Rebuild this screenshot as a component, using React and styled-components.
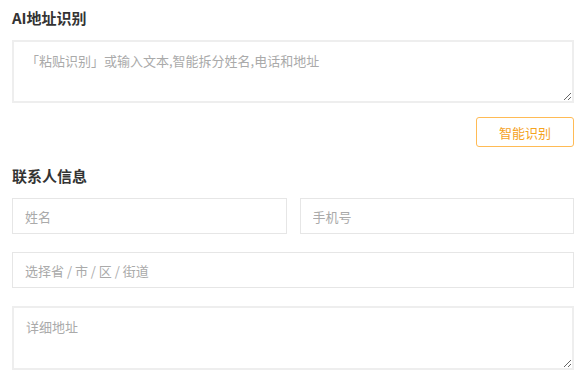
import React from 'react'
import styled, { createGlobalStyle } from 'styled-components'

const Global = createGlobalStyle`
  body {
    margin: 0;
    background: #fff;
    font-family: "Noto Sans CJK SC", "Noto Sans", sans-serif;
  }
  * { box-sizing: border-box; }
  textarea::placeholder, input::placeholder { color: #aaa; }
`

const Page = styled.div`
  width: 584px;
  padding: 8px 10px 0 12px;
`

const Title = styled.h2`
  margin: ${p => p.top || 0}px 0 12px;
  font-size: 15px;
  line-height: 20px;
  font-weight: 700;
  color: #333;
`

const Area = styled.textarea`
  display: block;
  width: 562px;
  height: ${p => p.h}px;
  margin-top: ${p => p.top || 0}px;
  padding: 10px 12px;
  border: 2px solid #eeeeee;
  outline: none;
  resize: vertical;
  font-family: inherit;
  font-size: 13px;
  line-height: 18px;
  color: #333;
`

const Actions = styled.div`
  display: flex;
  justify-content: flex-end;
  width: 562px;
  margin-top: 14px;
`

const Button = styled.button`
  width: 98px;
  height: 30px;
  border: 1px solid #ffbb55;
  border-radius: 3px;
  background: #fff;
  color: #f5a31f;
  font-family: inherit;
  font-size: 13px;
  cursor: pointer;
`

const Row = styled.div`
  display: grid;
  grid-template-columns: 1fr 1fr;
  gap: 13px;
  width: 562px;
`

const Input = styled.input`
  display: block;
  width: ${p => (p.full ? '562px' : '100%')};
  height: 36px;
  margin-top: ${p => p.top || 0}px;
  padding: 0 12px;
  border: 1px solid #e6e6e6;
  outline: none;
  font-family: inherit;
  font-size: 13px;
  color: #333;
`

export default function App() {
  return (
    <Page>
      <Global />
      <Title>AI地址识别</Title>
      <Area h={63} placeholder="「粘贴识别」或输入文本,智能拆分姓名,电话和地址" />
      <Actions>
        <Button>智能识别</Button>
      </Actions>
      <Title top={19}>联系人信息</Title>
      <Row>
        <Input placeholder="姓名" />
        <Input placeholder="手机号" />
      </Row>
      <Input full top={18} placeholder="选择省 / 市 / 区 / 街道" />
      <Area h={64} top={18} placeholder="详细地址" />
    </Page>
  )
}
